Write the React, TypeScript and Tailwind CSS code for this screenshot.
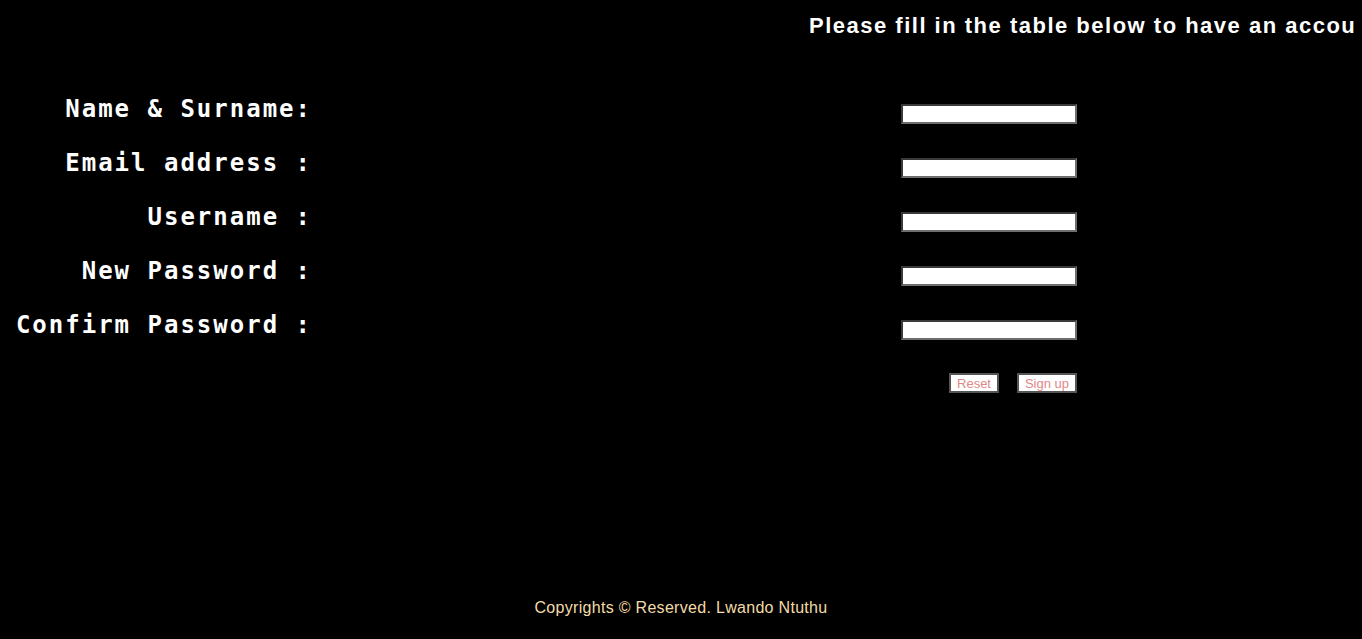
import React from "react";

const labels = [
  "Name & Surname:",
  "Email address :",
  "Username :",
  "New Password :",
  "Confirm Password :",
];

export default function App() {
  return (
    <div className="w-[1362px] h-[639px] bg-black overflow-hidden flex flex-col">
      <div className="h-[50px] flex pl-[809px] pr-[6px]">
        <div className="flex-1 overflow-hidden pt-[13px]">
          <p className="whitespace-nowrap text-white text-[22px] leading-[26px] font-bold tracking-[1.5px] [font-family:'Liberation_Sans',Arial,sans-serif]">
            Please fill in the table below to have an account
          </p>
        </div>
      </div>
      <div className="flex pt-[40px]">
        <div className="w-[312px] flex flex-col">
          {labels.map((l) => (
            <div
              key={l}
              className="h-[54px] text-right whitespace-pre text-white font-bold text-[24px] leading-[38px] tracking-[2px] [font-family:'DejaVu_Sans_Mono',monospace]"
            >
              {l}
            </div>
          ))}
        </div>
        <div className="w-[589px]" />
        <div className="w-[176px] flex flex-col pt-[14px]">
          {labels.map((l) => (
            <div key={l} className="h-[54px]">
              <input
                type={l.includes("Password") ? "password" : "text"}
                className="block w-[176px] h-[20px] bg-white border-2 border-t-[#3a3a3a] border-l-[#3a3a3a] border-b-[#6e6e6e] border-r-[#6e6e6e] outline-none"
              />
            </div>
          ))}
          <div className="flex justify-end gap-[18px] -mt-[1px]">
            <button className="w-[50px] h-[20px] bg-white border-2 border-[#555] text-[#e08888] text-[13px] leading-none [font-family:'Liberation_Sans',Arial,sans-serif]">
              Reset
            </button>
            <button className="w-[60px] h-[20px] bg-white border-2 border-[#555] text-[#e08888] text-[13px] leading-none [font-family:'Liberation_Sans',Arial,sans-serif]">
              Sign up
            </button>
          </div>
        </div>
      </div>
      <div className="flex-1" />
      <div className="h-[41px] text-center text-[#f3dca8] text-[16px] tracking-[0.3px] leading-[20px] [font-family:'Liberation_Sans',Arial,sans-serif]">
        Copyrights © Reserved. Lwando Ntuthu
      </div>
    </div>
  );
}
